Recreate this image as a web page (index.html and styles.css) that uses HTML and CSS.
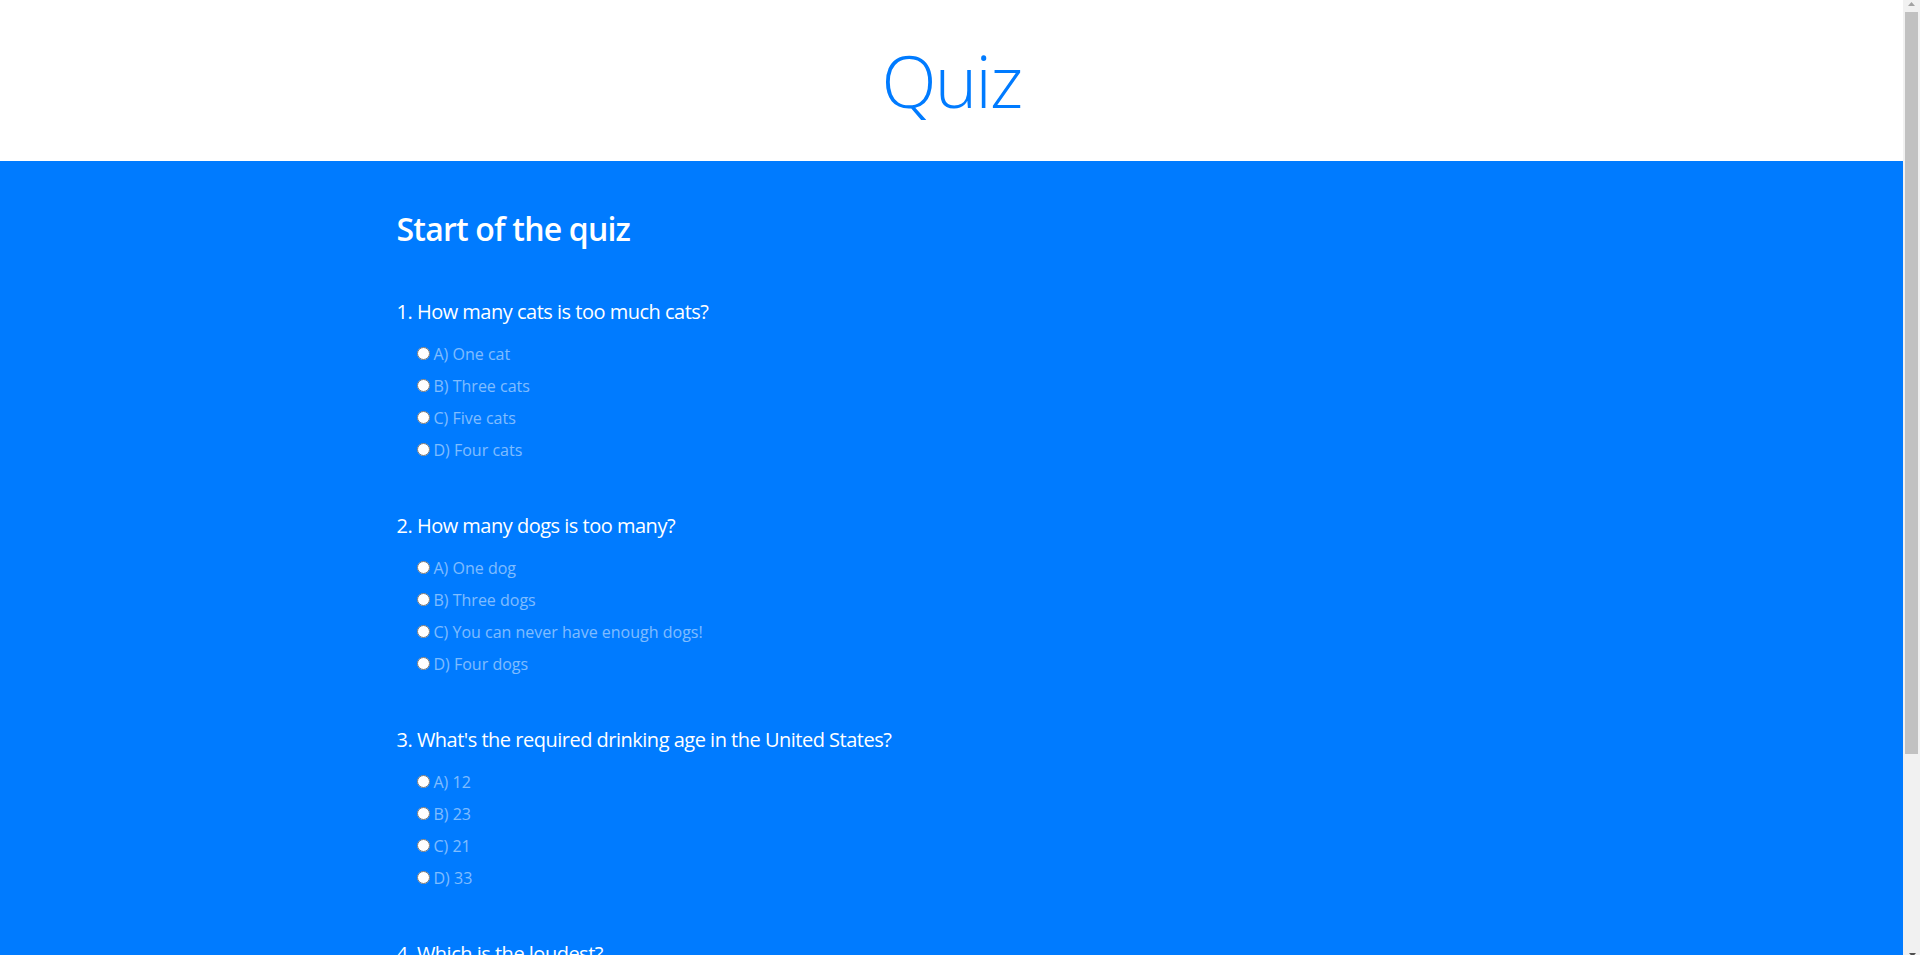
FILE: index.html
```html
<!DOCTYPE html>
<html lang="en">
<head>
<meta charset="utf-8">
<title>Quiz</title>
<link rel="stylesheet" href="styles.css">
</head>
<body>
<div class="page">
  <header class="site-header">
    <h1 class="title">Quiz</h1>
  </header>
  <main class="quiz-section">
    <div class="container">
      <h2 class="quiz-heading">Start of the quiz</h2>
      <form class="quiz-form">
        <div class="question">
          <h5 class="question-text">1. How many cats is too much cats?</h5>
          <div class="options">
            <label class="option"><input type="radio" name="q1" value="A">A) One cat</label>
            <label class="option"><input type="radio" name="q1" value="B">B) Three cats</label>
            <label class="option"><input type="radio" name="q1" value="C">C) Five cats</label>
            <label class="option"><input type="radio" name="q1" value="D">D) Four cats</label>
          </div>
        </div>
        <div class="question">
          <h5 class="question-text">2. How many dogs is too many?</h5>
          <div class="options">
            <label class="option"><input type="radio" name="q2" value="A">A) One dog</label>
            <label class="option"><input type="radio" name="q2" value="B">B) Three dogs</label>
            <label class="option"><input type="radio" name="q2" value="C">C) You can never have enough dogs!</label>
            <label class="option"><input type="radio" name="q2" value="D">D) Four dogs</label>
          </div>
        </div>
        <div class="question">
          <h5 class="question-text">3. What's the required drinking age in the United States?</h5>
          <div class="options">
            <label class="option"><input type="radio" name="q3" value="A">A) 12</label>
            <label class="option"><input type="radio" name="q3" value="B">B) 23</label>
            <label class="option"><input type="radio" name="q3" value="C">C) 21</label>
            <label class="option"><input type="radio" name="q3" value="D">D) 33</label>
          </div>
        </div>
        <div class="question">
          <h5 class="question-text">4. Which is the loudest?</h5>
          <div class="options">
            <label class="option"><input type="radio" name="q4" value="A">A) A cat</label>
            <label class="option"><input type="radio" name="q4" value="B">B) A dog</label>
            <label class="option"><input type="radio" name="q4" value="C">C) A bird</label>
            <label class="option"><input type="radio" name="q4" value="D">D) A mouse</label>
          </div>
        </div>
      </form>
    </div>
  </main>
</div>
<aside class="scrollbar" aria-hidden="true">
  <div class="sb-arrow sb-arrow-up">
    <svg width="7" height="4" viewBox="0 0 7 4"><polygon points="3.5,0 7,4 0,4" fill="#a3a3a3"/></svg>
  </div>
  <div class="sb-thumb"></div>
  <div class="sb-track"></div>
  <div class="sb-arrow sb-arrow-down">
    <svg width="7" height="4" viewBox="0 0 7 4"><polygon points="0,0 7,0 3.5,4" fill="#505050"/></svg>
  </div>
</aside>
</body>
</html>
```

FILE: styles.css
```css
*, *::before, *::after {
  box-sizing: border-box;
}
html, body {
  margin: 0;
  padding: 0;
}
body {
  font-family: "Open Sans", "Noto Sans", sans-serif;
  color: #212529;
  background: #fff;
  display: flex;
  align-items: flex-start;
}
.page {
  flex: 1 1 auto;
  min-width: 0;
}
.scrollbar {
  flex: 0 0 17px;
  width: 17px;
  height: 100vh;
  position: sticky;
  top: 0;
  background: #f1f1f1;
  display: flex;
  flex-direction: column;
  align-items: stretch;
}
.sb-arrow {
  display: flex;
  justify-content: center;
  flex: none;
}
.sb-arrow svg {
  display: block;
}
.sb-arrow-up {
  height: 12px;
  padding-top: 2px;
}
.sb-arrow-down {
  height: 5px;
  padding-top: 3px;
  margin-left: 1px;
}
.sb-thumb {
  flex: none;
  height: 742px;
  margin: 0 2px;
  background: #c1c1c1;
}
.sb-track {
  flex: 1 1 auto;
}
.site-header {
  background: #fff;
  padding: 37px 0 38px;
  text-align: center;
}
.title {
  margin: 0;
  font-size: 72px;
  line-height: 86px;
  font-weight: 300;
  letter-spacing: -1.8px;
  color: #007bff;
}
.quiz-section {
  background: #007bff;
  color: #fff;
  padding: 49px 0 64px;
}
.container {
  max-width: 1140px;
  margin: 0 auto;
  padding: 0 15px;
}
.quiz-heading {
  margin: 0 0 52px;
  font-size: 32px;
  line-height: 38px;
  font-weight: 600;
  letter-spacing: -0.8px;
}
.quiz-form {
  display: flex;
  flex-direction: column;
  gap: 52px;
}
.question {
  display: flex;
  flex-direction: column;
  gap: 18px;
}
.question-text {
  margin: 0;
  font-size: 20px;
  line-height: 24px;
  font-weight: 400;
  letter-spacing: -0.5px;
}
.options {
  display: flex;
  flex-direction: column;
  gap: 8px;
  padding-left: 15px;
}
.option {
  font-size: 16px;
  line-height: 24px;
  color: rgba(255, 255, 255, 0.5);
}
.option input {
  width: 13px;
  height: 13px;
  margin: 3px 4px 0 5px;
}
```
